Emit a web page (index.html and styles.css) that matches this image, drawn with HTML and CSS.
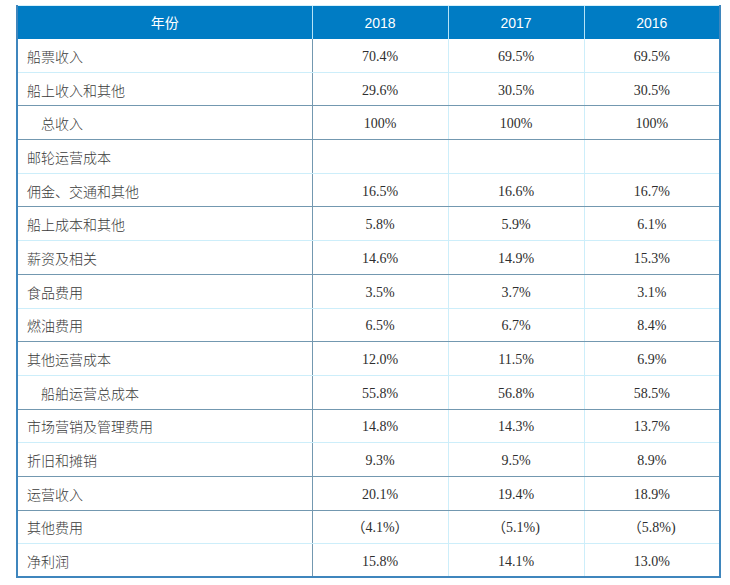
FILE: index.html
```html
<!DOCTYPE html>
<html lang="zh">
<head>
<meta charset="utf-8">
<link rel="stylesheet" href="styles.css">
</head>
<body>
<table class="fin">
  <colgroup>
    <col class="c-label"><col class="c-num"><col class="c-num"><col class="c-num">
  </colgroup>
  <thead>
    <tr><th>年份</th><th>2018</th><th>2017</th><th>2016</th></tr>
  </thead>
  <tbody>
    <tr class="l"><td>船票收入</td><td>70.4%</td><td>69.5%</td><td>69.5%</td></tr>
    <tr class="d"><td>船上收入和其他</td><td>29.6%</td><td>30.5%</td><td>30.5%</td></tr>
    <tr class="d"><td class="ind">总收入</td><td>100%</td><td>100%</td><td>100%</td></tr>
    <tr class="l"><td>邮轮运营成本</td><td></td><td></td><td></td></tr>
    <tr class="d"><td>佣金、交通和其他</td><td>16.5%</td><td>16.6%</td><td>16.7%</td></tr>
    <tr class="l"><td>船上成本和其他</td><td>5.8%</td><td>5.9%</td><td>6.1%</td></tr>
    <tr class="d"><td>薪资及相关</td><td>14.6%</td><td>14.9%</td><td>15.3%</td></tr>
    <tr class="l"><td>食品费用</td><td>3.5%</td><td>3.7%</td><td>3.1%</td></tr>
    <tr class="d"><td>燃油费用</td><td>6.5%</td><td>6.7%</td><td>8.4%</td></tr>
    <tr class="l"><td>其他运营成本</td><td>12.0%</td><td>11.5%</td><td>6.9%</td></tr>
    <tr class="d"><td class="ind">船舶运营总成本</td><td>55.8%</td><td>56.8%</td><td>58.5%</td></tr>
    <tr class="l"><td>市场营销及管理费用</td><td>14.8%</td><td>14.3%</td><td>13.7%</td></tr>
    <tr class="d"><td>折旧和摊销</td><td>9.3%</td><td>9.5%</td><td>8.9%</td></tr>
    <tr class="d"><td>运营收入</td><td>20.1%</td><td>19.4%</td><td>18.9%</td></tr>
    <tr class="l"><td>其他费用</td><td>（4.1%）</td><td>（5.1%)</td><td>（5.8%)</td></tr>
    <tr class="last"><td>净利润</td><td>15.8%</td><td>14.1%</td><td>13.0%</td></tr>
  </tbody>
</table>
</body>
</html>
```

FILE: styles.css
```css
html, body {
  margin: 0;
  background: #ffffff;
}
body {
  padding: 5px 0 0 16px;
}
.fin {
  border-collapse: collapse;
  table-layout: fixed;
  width: 702px;
  border-left: 2px solid #3f86bd;
  border-right: 2px solid #3f86bd;
  border-bottom: 2px solid #3f86bd;
  font-family: "Liberation Serif", "Noto Sans CJK SC", serif;
  font-size: 14px;
  line-height: 16px;
  color: #2e2e2e;
}
.c-label { width: 295px; }
.c-num { width: 136px; }
.fin thead th {
  background: #007cc4;
  color: #ffffff;
  font-family: "Liberation Sans", "Noto Sans CJK SC", sans-serif;
  font-weight: normal;
  font-size: 14px;
  height: 33px;
  padding: 0;
  text-align: center;
  border-top: 1px solid #d6f1fb;
  border-left: 1px solid #b5e3f7;
}
.fin thead th:first-child { border-left: none; }
.fin td {
  height: 29.7px;
  padding: 3px 0 0 0;
  text-align: center;
  vertical-align: middle;
  border-right: 1px solid #cdeefa;
}
.fin td:first-child {
  height: 31.7px;
  text-align: left;
  padding: 1px 0 0 9px;
  font-family: "Noto Sans CJK SC", sans-serif;
  font-weight: 300;
  color: #3a3a3a;
  border-right: 1px solid #7398b0;
}
.fin td:nth-child(3) { border-right: 1px solid #cdeefa; }
.fin td:nth-child(4) { border-right: 1px solid #7398b0; }
.fin td.ind { padding-left: 23px; }
.fin tr.l td { border-bottom: 1px solid #cdeefa; }
.fin tr.d td { border-bottom: 1px solid #7398b0; }
.fin tr.last td { height: 29px; }
.fin tr.last td:first-child { height: 31px; }
```
